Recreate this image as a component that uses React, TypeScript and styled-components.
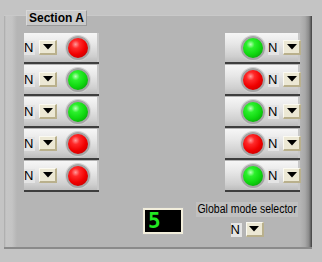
import React from 'react';
import styled, { createGlobalStyle } from 'styled-components';

type LedColor = 'red' | 'green';

const leftStates: LedColor[] = ['red', 'green', 'green', 'red', 'red'];
const rightStates: LedColor[] = ['green', 'red', 'green', 'red', 'green'];

const GlobalStyle = createGlobalStyle`
    body {
        margin: 0;
        background: #c4c4c4;
        font-family: 'Liberation Sans', Arial, sans-serif;
    }
`;

export default function App() {
    return (
        <Screen>
            <GlobalStyle />
            <Panel>
                <Caption>Section A</Caption>
                <Columns>
                    <Column>
                        {leftStates.map((c, i) => (
                            <Row key={i}>
                                <ModeSelect />
                                <LedSlot $side="left">
                                    <Led $color={c} />
                                </LedSlot>
                            </Row>
                        ))}
                    </Column>
                    <Column>
                        {rightStates.map((c, i) => (
                            <Row key={i} $right>
                                <LedSlot $side="right">
                                    <Led $color={c} />
                                </LedSlot>
                                <ModeSelect />
                            </Row>
                        ))}
                    </Column>
                </Columns>
                <Footer>
                    <Display>
                        <Digit>5</Digit>
                    </Display>
                    <GlobalBlock>
                        <GlobalLabel>
                            <NarrowText>Global mode selector</NarrowText>
                        </GlobalLabel>
                        <ModeSelect />
                    </GlobalBlock>
                </Footer>
            </Panel>
        </Screen>
    );
}

const ModeSelect = () => (
    <SelectWrap>
        <ValueBox>N</ValueBox>
        <DropButton>
            <svg width="10" height="6" viewBox="0 0 10 6">
                <polygon points="0,0 10,0 5,5.5" fill="#000" />
            </svg>
        </DropButton>
    </SelectWrap>
);

const Screen = styled.div`
    width: 322px;
    height: 262px;
    padding: 15px 0 0 4px;
    box-sizing: border-box;
`;

const Panel = styled.div`
    position: relative;
    width: 308px;
    height: 234px;
    box-sizing: border-box;
    padding: 18px 12px 0 20px;
    background: linear-gradient(
        to right,
        #a9a9a9 0px,
        #c6c6c6 2px,
        #c4c4c4 8px,
        #b5b5b5 13px,
        #b5b5b5 calc(100% - 12px),
        #a8a8a8 calc(100% - 7px),
        #8a8a8a calc(100% - 3px),
        #5a5a5a calc(100% - 1px),
        #3c3c3c 100%
    );
    box-shadow: inset 0 1px 0 #c9c9c9, inset 0 -2px 0 #8a8a8a;
`;

const Caption = styled.div`
    position: absolute;
    left: 22px;
    top: -5px;
    height: 14px;
    padding: 0 2px;
    background: #c9c9c9;
    border: 1px solid #9a9a9a;
    border-top-color: #d8d8d8;
    border-left-color: #d8d8d8;
    font-size: 12px;
    font-weight: bold;
    line-height: 14px;
    color: #000;
`;

const Columns = styled.div`
    display: flex;
    justify-content: space-between;
`;

const Column = styled.div`
    display: flex;
    flex-direction: column;
    gap: 1px;
    width: 75px;
`;

const Row = styled.div<{ $right?: boolean }>`
    display: flex;
    align-items: center;
    height: 29px;
    padding-right: ${(p) => (p.$right ? '1px' : '0')};
    background: linear-gradient(to bottom, #f6f6f6 0%, #e8e8e8 35%, #cfcfcf 80%, #bdbdbd 100%);
    border-bottom: 2px solid #3e3e3e;
    box-shadow: inset -2px 0 0 #c8c8c8;
`;

const LedSlot = styled.div<{ $side: 'left' | 'right' }>`
    display: flex;
    margin: ${(p) => (p.$side === 'left' ? '0 0 0 9px' : '0 3px 0 16px')};
`;

const Led = styled.div<{ $color: LedColor }>`
    width: 20px;
    height: 20px;
    border-radius: 50%;
    border: 2px solid #a4a4a4;
    box-shadow: 0 0 0 1px #d0d0d0;
    background: ${(p) =>
        p.$color === 'red'
            ? 'radial-gradient(circle at 38% 32%, #ff9a9a 0%, #ff2a2a 22%, #f00000 55%, #b00000 100%)'
            : 'radial-gradient(circle at 38% 32%, #b8ffb8 0%, #2cf02c 22%, #10d810 55%, #078a07 100%)'};
`;

const SelectWrap = styled.div`
    display: flex;
    align-items: center;
    gap: 4px;
`;

const ValueBox = styled.div`
    width: 11px;
    height: 14px;
    background: #e4e4e4;
    font-size: 13px;
    line-height: 14px;
    text-align: left;
    color: #000;
`;

const DropButton = styled.div`
    display: flex;
    align-items: center;
    justify-content: center;
    width: 18px;
    height: 15px;
    box-sizing: border-box;
    background: #ece8d4;
    border-top: 1px solid #fbfaf2;
    border-left: 1px solid #fbfaf2;
    border-right: 2px solid #b9b08c;
    border-bottom: 2px solid #b9b08c;
`;

const Footer = styled.div`
    display: flex;
    justify-content: flex-end;
    align-items: flex-start;
    margin-top: 10px;
    padding-right: 2px;
`;

const Display = styled.div`
    display: flex;
    align-items: center;
    width: 40px;
    height: 26px;
    margin: 6px 13px 0 0;
    box-sizing: border-box;
    padding-left: 3px;
    background: #000;
    border: 2px solid #f2eedc;
    box-shadow: 0 0 0 1px #b8b8b8;
`;

const Digit = styled.span`
    font-family: 'DejaVu Sans Mono', 'Liberation Mono', monospace;
    font-weight: bold;
    font-size: 21px;
    line-height: 20px;
    color: #22e822;
`;

const GlobalBlock = styled.div`
    display: flex;
    flex-direction: column;
    align-items: center;
    gap: 5px;
    width: 102px;
`;

const GlobalLabel = styled.div`
    display: flex;
    justify-content: center;
    width: 100%;
    height: 15px;
    background: #c0c0c0;
    overflow: hidden;
`;

const NarrowText = styled.span`
    display: inline-block;
    font-size: 12.5px;
    line-height: 15px;
    color: #000;
    white-space: nowrap;
    transform: scaleX(0.84);
    transform-origin: center;
`;
